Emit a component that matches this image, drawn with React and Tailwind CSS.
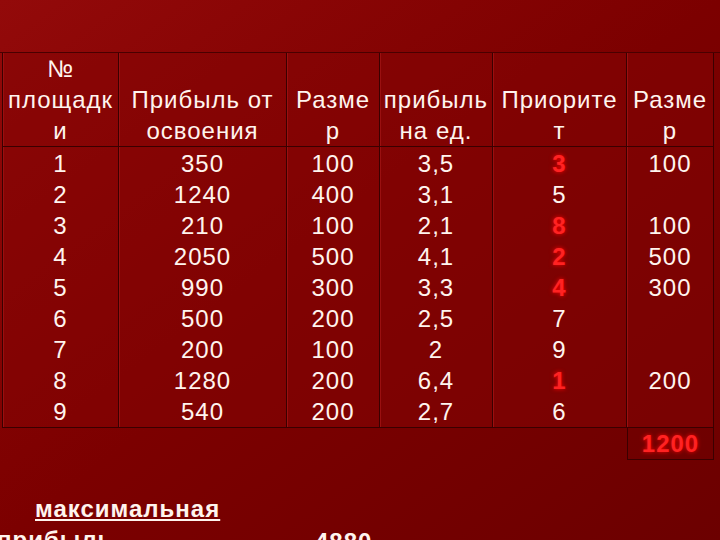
const headerLines = [
  ['№', 'площадк', 'и'],
  ['Прибыль от', 'освоения'],
  ['Разме', 'р'],
  ['прибыль', 'на ед.'],
  ['Приорите', 'т'],
  ['Разме', 'р'],
]

const rows = [
  [1, 350, 100, '3,5', { v: 3, hot: true }, 100],
  [2, 1240, 400, '3,1', { v: 5 }, ''],
  [3, 210, 100, '2,1', { v: 8, hot: true }, 100],
  [4, 2050, 500, '4,1', { v: 2, hot: true }, 500],
  [5, 990, 300, '3,3', { v: 4, hot: true }, 300],
  [6, 500, 200, '2,5', { v: 7 }, ''],
  [7, 200, 100, '2', { v: 9 }, ''],
  [8, 1280, 200, '6,4', { v: 1, hot: true }, 200],
  [9, 540, 200, '2,7', { v: 6 }, ''],
]

const cell = 'border-r border-b border-[#3a0000] shadow-[inset_1px_0_0_#9a1010] bg-[#840303]/50'
const hot = 'font-bold text-[#ff2222] [text-shadow:0_0_4px_#ff0000]'

export default function App() {
  return (
    <div
      className="w-[720px] h-[540px] overflow-hidden bg-gradient-to-br from-[#930a0a] via-[#7c0000] to-[#6c0000] text-[#fff4ee] text-[24px] leading-[31px] tracking-[1px]"
      style={{ fontFamily: '"Liberation Sans", Arial, sans-serif' }}
    >
      <div className="h-[53px] border-b border-[#4a0000]" />

      <div className="ml-[2px] grid grid-cols-[117px_168px_93px_113px_134px_87px]">
        {headerLines.map((lines, i) => (
          <div
            key={'h' + i}
            className={`${cell} ${i === 0 ? 'border-l' : ''} h-[94px] flex flex-col justify-end text-center whitespace-nowrap`}
          >
            {lines.map((l) => (
              <div key={l}>{l}</div>
            ))}
          </div>
        ))}

        {[0, 1, 2, 3, 4, 5].map((c) => (
          <div key={'c' + c} className={`${cell} ${c === 0 ? 'border-l' : ''} h-[281px] pt-px text-center`}>
            {rows.map((r, j) => {
              const v = r[c]
              if (c === 4) {
                return (
                  <div key={j} className={v.hot ? hot : ''}>
                    {v.v}
                  </div>
                )
              }
              return <div key={j} className="h-[31px]">{v}</div>
            })}
          </div>
        ))}

        <div className="col-start-6 h-[32px] border-r border-b border-l border-[#3a0000] text-center">
          <span className={hot}>1200</span>
        </div>
      </div>

      <div className="flex mt-[33px] font-bold">
        <div className="w-[315px]">
          <div className="pl-[35px] underline decoration-2 underline-offset-2">максимальная</div>
          <div className="-ml-[3px] underline decoration-2 underline-offset-2">прибыль</div>
        </div>
        <div className="pt-[33px]">4880</div>
      </div>
    </div>
  )
}
